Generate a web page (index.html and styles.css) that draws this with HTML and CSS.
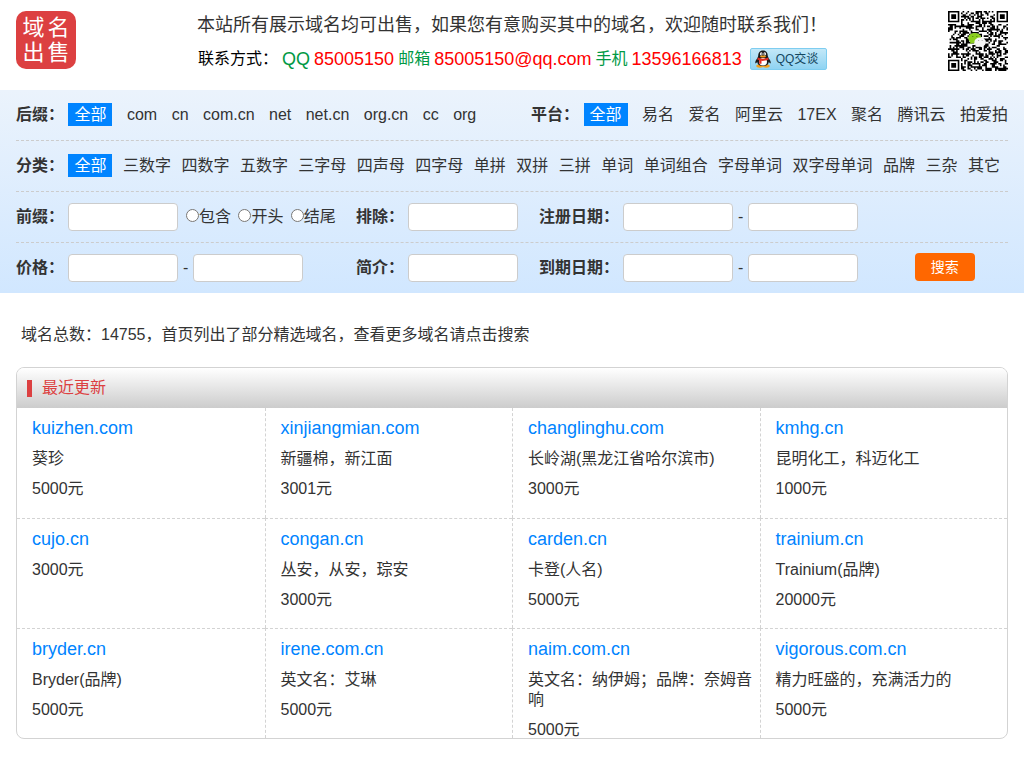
FILE: index.html
```html
<!DOCTYPE html>
<html lang="zh-CN">
<head>
<meta charset="utf-8">
<title>域名出售</title>
<link rel="stylesheet" href="styles.css">
</head>
<body>
<header class="top">
  <a class="logo" href="#"><span>域</span><span>名</span><span>出</span><span>售</span></a>
  <div class="intro">
    <p class="slogan">本站所有展示域名均可出售，如果您有意购买其中的域名，欢迎随时联系我们！</p>
    <div class="contact">
      <span>联系方式：</span>
      <span class="kind latin">QQ</span>
      <span class="value">85005150</span>
      <span class="kind">邮箱</span>
      <span class="value">85005150@qq.com</span>
      <span class="kind">手机</span>
      <span class="value">13596166813</span>
      <a class="qq" href="#">
        <svg width="18" height="18" viewBox="0 0 18 18" aria-hidden="true">
          <path d="M3.5 8C1.800 10 .8 12 1.500 13.500L4 11.500ZM14.500 8c1.700 2 2.700 4 2 5.500L14 11.500Z" fill="#1a1a1a"/>
          <ellipse cx="5.800" cy="16" rx="3.500" ry="1.700" fill="#f5a01a"/>
          <ellipse cx="12.200" cy="16" rx="3.500" ry="1.700" fill="#f5a01a"/>
          <path d="M9 .5C5.500.5 4.200 3 4.200 6C3.200 8 2.800 10 3.200 12C3.800 15 6 16 9 16s5.200-1 5.800-4c.4-2 0-4-1-6C13.800 3 12.500.5 9 .5Z" fill="#1a1a1a"/>
          <ellipse cx="9" cy="11.800" rx="4" ry="3.800" fill="#fff"/>
          <ellipse cx="7.300" cy="3.900" rx="1.300" ry="1.700" fill="#fff"/>
          <ellipse cx="10.700" cy="3.900" rx="1.300" ry="1.700" fill="#fff"/>
          <circle cx="7.700" cy="4" r=".6"/><circle cx="10.300" cy="4" r=".6"/>
          <ellipse cx="9" cy="6.500" rx="3" ry="1" fill="#f5a01a"/>
          <path d="M3.800 7.500C7 9.300 11 9.300 14.200 7.500l.4 2C11 11 8.500 11 7.500 10.800v3H5.200v-3.500L3.400 9.500Z" fill="#e32b1e"/>
        </svg>
        <span>QQ交谈</span>
      </a>
    </div>
  </div>
  <svg class="qr" id="qr" viewBox="0 0 37 37" role="img" aria-label="微信二维码"></svg>
</header>

<form class="search">
  <div class="row split">
    <div class="links wide"><b>后缀：</b> <a class="on" href="#">全部</a> <a href="#">com</a> <a href="#">cn</a> <a href="#">com.cn</a> <a href="#">net</a> <a href="#">net.cn</a> <a href="#">org.cn</a> <a href="#">cc</a> <a href="#">org</a></div>
    <div class="links wide"><b>平台：</b> <a class="on" href="#">全部</a> <a href="#">易名</a> <a href="#">爱名</a> <a href="#">阿里云</a> <a href="#">17EX</a> <a href="#">聚名</a> <a href="#">腾讯云</a> <a href="#">拍爱拍</a></div>
  </div>
  <div class="row">
    <div class="links"><b>分类：</b> <a class="on" href="#">全部</a> <a href="#">三数字</a> <a href="#">四数字</a> <a href="#">五数字</a> <a href="#">三字母</a> <a href="#">四声母</a> <a href="#">四字母</a> <a href="#">单拼</a> <a href="#">双拼</a> <a href="#">三拼</a> <a href="#">单词</a> <a href="#">单词组合</a> <a href="#">字母单词</a> <a href="#">双字母单词</a> <a href="#">品牌</a> <a href="#">三杂</a> <a href="#">其它</a></div>
  </div>
  <div class="row">
    <div class="field"><label for="prefix">前缀：</label> <input class="box" id="prefix" type="text"> <input class="dot" type="radio" name="pos" id="p1"><label class="opt" for="p1">包含</label> <input class="dot" type="radio" name="pos" id="p2"><label class="opt" for="p2">开头</label> <input class="dot" type="radio" name="pos" id="p3"><label class="opt" for="p3">结尾</label></div>
    <div class="field"><label for="exclude">排除：</label> <input class="box" id="exclude" type="text"></div>
    <div class="field"><label for="reg1">注册日期：</label> <input class="box" id="reg1" type="text"> - <input class="box" id="reg2" type="text" aria-label="注册日期止"></div>
  </div>
  <div class="row">
    <div class="field"><label for="price1">价格：</label> <input class="box" id="price1" type="text"> - <input class="box" id="price2" type="text" aria-label="价格上限"></div>
    <div class="field"><label for="desc">简介：</label> <input class="box" id="desc" type="text"></div>
    <div class="field"><label for="exp1">到期日期：</label> <input class="box" id="exp1" type="text"> - <input class="box" id="exp2" type="text" aria-label="到期日期止"></div>
    <button class="go" type="submit">搜索</button>
  </div>
</form>

<main>
  <p class="total">域名总数：14755，首页列出了部分精选域名，查看更多域名请点击搜索</p>
  <section class="card">
    <h2 class="card-head">最近更新</h2>
    <div class="grid">
      <div class="cell"><a href="#">kuizhen.com</a><p class="note">葵珍</p><p class="price">5000元</p></div>
      <div class="cell"><a href="#">xinjiangmian.com</a><p class="note">新疆棉，新江面</p><p class="price">3001元</p></div>
      <div class="cell"><a href="#">changlinghu.com</a><p class="note">长岭湖(黑龙江省哈尔滨市)</p><p class="price">3000元</p></div>
      <div class="cell"><a href="#">kmhg.cn</a><p class="note">昆明化工，科迈化工</p><p class="price">1000元</p></div>
      <div class="cell"><a href="#">cujo.cn</a><p class="note">3000元</p></div>
      <div class="cell"><a href="#">congan.cn</a><p class="note">丛安，从安，琮安</p><p class="price">3000元</p></div>
      <div class="cell"><a href="#">carden.cn</a><p class="note">卡登(人名)</p><p class="price">5000元</p></div>
      <div class="cell"><a href="#">trainium.cn</a><p class="note">Trainium(品牌)</p><p class="price">20000元</p></div>
      <div class="cell"><a href="#">bryder.cn</a><p class="note">Bryder(品牌)</p><p class="price">5000元</p></div>
      <div class="cell"><a href="#">irene.com.cn</a><p class="note">英文名：艾琳</p><p class="price">5000元</p></div>
      <div class="cell"><a href="#">naim.com.cn</a><p class="note">英文名：纳伊姆；品牌：奈姆音响</p><p class="price">5000元</p></div>
      <div class="cell"><a href="#">vigorous.com.cn</a><p class="note">精力旺盛的，充满活力的</p><p class="price">5000元</p></div>
    </div>
  </section>
</main>
<script src="qr.js"></script>
</body>
</html>
```
FILE: styles.css
```css
* { box-sizing: border-box; }
body {
  margin: 0;
  background: #fff;
  color: #333;
  font: 16px/20px "Liberation Sans", "Noto Sans CJK SC", sans-serif;
}
p, h2 { margin: 0; }
a { color: inherit; text-decoration: none; }

.top {
  display: flex;
  align-items: flex-start;
  min-height: 90px;
  padding: 11px 16px 0;
}
.logo {
  display: grid;
  grid-template-columns: auto auto;
  justify-content: center;
  align-content: center;
  column-gap: 3px;
  width: 60px;
  height: 58px;
  border-radius: 10px;
  background: #dc4041;
  color: #fff;
  font-size: 22px;
  line-height: 25px;
}
.intro { flex: 1; padding-left: 121px; }
.slogan { font-size: 18px; line-height: 28px; }
.contact {
  display: flex;
  align-items: center;
  gap: 4px;
  margin-top: 9px;
  padding-left: 1px;
  line-height: 22px;
  color: #000;
  white-space: nowrap;
}
.kind { color: #009944; }
.latin, .value { font-size: 18px; }
.value { color: #f00; }
.qq {
  display: flex;
  align-items: center;
  gap: 4px;
  width: 77px;
  height: 22px;
  margin-left: 4px;
  padding-left: 3px;
  border: 1px solid #7ecdf0;
  border-radius: 2px;
  background: linear-gradient(#c3e8f8, #8fd3f2);
  color: #14475f;
  font-size: 12px;
}
.qr { width: 60px; height: 60px; }

.search {
  padding: 0 16px;
  background: linear-gradient(#ebf3fc, #d1e7ff);
}
.row {
  display: flex;
  align-items: center;
  min-height: 51px;
  border-bottom: 1px dashed #ccc;
}
.row:last-child { min-height: 50px; border-bottom: 0; }
.split { justify-content: space-between; }
.links { padding-bottom: 2px; white-space: nowrap; }
.links a { margin-left: 6px; }
.wide a { margin-left: 10px; }
.links .on {
  display: inline-block;
  margin-left: 0;
  padding: 0 6px;
  background: #0084ff;
  color: #fff;
  line-height: 23px;
}
.field { white-space: nowrap; }
.field:nth-child(1) { width: 340px; }
.field:nth-child(2) { width: 183px; }
.field label { font-weight: bold; }
.field .opt { font-weight: normal; }
.box {
  width: 110px;
  height: 28px;
  border: 1px solid #ccc;
  border-radius: 4px;
  background: #fff;
}
.dot { margin: 0 0 0 3px; }
.go {
  width: 60px;
  height: 28px;
  margin-left: 57px;
  margin-bottom: 2px;
  padding: 0;
  border: 0;
  border-radius: 4px;
  background: #ff6700;
  color: #fff;
  font: 14px/28px "Liberation Sans", "Noto Sans CJK SC", sans-serif;
}

main { padding: 32px 16px; }
.total { padding-left: 5px; }
.card {
  margin-top: 22px;
  border: 1px solid #d3d3d3;
  border-radius: 8px;
  overflow: hidden;
}
.card-head {
  display: flex;
  align-items: center;
  gap: 10px;
  height: 40px;
  padding-left: 10px;
  background: linear-gradient(#fff, #ccc);
  color: #dc4041;
  font-size: 16px;
  font-weight: normal;
}
.card-head::before {
  content: "";
  width: 5px;
  height: 17px;
  background: #dc4041;
}
.grid {
  display: grid;
  grid-template-columns: repeat(4, 1fr);
  grid-auto-rows: minmax(110px, auto);
}
.cell {
  padding: 10px 5px 0 15px;
  border-left: 1px dashed #d3d3d3;
  border-top: 1px dashed #d3d3d3;
}
.cell:nth-child(4n+1) { border-left: 0; }
.cell:nth-child(-n+4) { border-top: 0; }
.cell a { display: block; color: #0084ff; font-size: 18px; }
.note { margin-top: 11px; }
.price { margin-top: 12px; line-height: 16px; }
```
FILE: qr.js
```js
const N = 37;
const svg = document.getElementById("qr");
let seed = 7;
const next = () => (seed = (seed * 1103515245 + 12345) % 2147483648) / 2147483648;

function finder(x, y, fx, fy) {
  const dx = x - fx, dy = y - fy;
  if (dx < -1 || dx > 7 || dy < -1 || dy > 7) return null;
  const d = Math.max(Math.abs(dx - 3), Math.abs(dy - 3));
  return d === 3 || d < 2;
}

let path = "";
for (let y = 0; y < N; y++) {
  for (let x = 0; x < N; x++) {
    const r = next() > 0.48;
    const dark = finder(x, y, 0, 0) ?? finder(x, y, N - 7, 0) ?? finder(x, y, 0, N - 7) ?? r;
    if (dark) path += `M${x} ${y}h1v1h-1z`;
  }
}
svg.innerHTML = `<path d="${path}" fill="#000"/>
<path d="M16.500 13.500c-2.400 0-4 1.400-4 3.200 0 1 .5 1.800 1.300 2.400l-.4 1.400 1.600-.8c2.500.6 5.500-.6 5.500-3.100 0-1.800-1.700-3.100-4-3.100Z" fill="#8bcf1f"/>
<path d="M20 16.300c-2.300 0-3.700 1.300-3.700 2.900s1.500 2.900 3.700 2.900l1.800.5-.2-.9c1-.5 1.700-1.400 1.700-2.500 0-1.600-1.500-2.900-3.300-2.900Z" fill="#f5f5f5"/>
<path d="M15 15.500h.6v.6H15zM17.500 15.500h.6v.6h-.6z" fill="#2d5a00"/>
<path d="M18.700 18h.5v.5h-.5zM20.800 18h.5v.5h-.5z" fill="#777"/>`;
```
